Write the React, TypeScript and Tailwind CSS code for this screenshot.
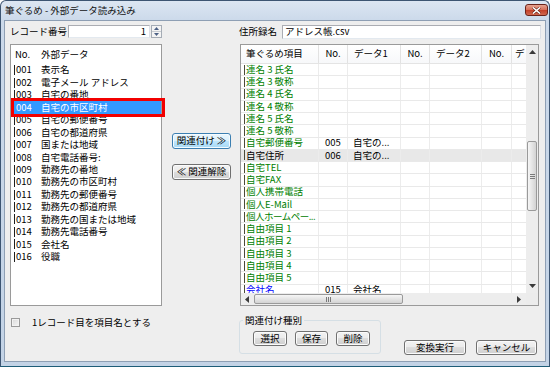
import React from "react";

const sourceRows: [string, string][] = [
  ["001", "表示名"],
  ["002", "電子メール アドレス"],
  ["003", "自宅の番地"],
  ["004", "自宅の市区町村"],
  ["005", "自宅の郵便番号"],
  ["006", "自宅の都道府県"],
  ["007", "国または地域"],
  ["008", "自宅電話番号:"],
  ["009", "勤務先の番地"],
  ["010", "勤務先の市区町村"],
  ["011", "勤務先の郵便番号"],
  ["012", "勤務先の都道府県"],
  ["013", "勤務先の国または地域"],
  ["014", "勤務先電話番号"],
  ["015", "会社名"],
  ["016", "役職"],
];

type FieldRow = {
  name: string;
  no?: string;
  data?: string;
  tone: "green" | "black" | "blue";
  hot?: boolean;
  tight?: boolean;
};

const fieldRows: FieldRow[] = [
  { name: "連名 3 氏名", tone: "green" },
  { name: "連名 3 敬称", tone: "green" },
  { name: "連名 4 氏名", tone: "green" },
  { name: "連名 4 敬称", tone: "green" },
  { name: "連名 5 氏名", tone: "green" },
  { name: "連名 5 敬称", tone: "green" },
  { name: "自宅郵便番号", no: "005", data: "自宅の...", tone: "green" },
  { name: "自宅住所", no: "006", data: "自宅の...", tone: "black", hot: true },
  { name: "自宅TEL", tone: "green" },
  { name: "自宅FAX", tone: "green" },
  { name: "個人携帯電話", tone: "green" },
  { name: "個人E-Mail", tone: "green" },
  { name: "個人ホームペー...", tone: "green", tight: true },
  { name: "自由項目 1", tone: "green" },
  { name: "自由項目 2", tone: "green" },
  { name: "自由項目 3", tone: "green" },
  { name: "自由項目 4", tone: "green" },
  { name: "自由項目 5", tone: "green" },
  { name: "会社名", no: "015", data: "会社名", tone: "blue" },
];

const toneClass = { green: "text-[#008000]", black: "text-black", blue: "text-[#0000ff]" };

const btn =
  "flex items-center justify-center rounded-[3px] border border-[#707070] bg-[linear-gradient(#f2f2f2_0%,#ebebeb_50%,#dddddd_50%,#cfcfcf_100%)] shadow-[inset_0_0_0_1px_#fbfbfb]";

const Arrow = ({ dir }: { dir: "up" | "down" | "left" | "right" }) => {
  const pts = {
    up: "0,4 3.5,0 7,4",
    down: "0,0 3.5,4 7,0",
    left: "4,0 0,3.5 4,7",
    right: "0,0 4,3.5 0,7",
  }[dir];
  const vertical = dir === "up" || dir === "down";
  return (
    <svg width={vertical ? 7 : 4} height={vertical ? 4 : 7} viewBox={vertical ? "0 0 7 4" : "0 0 4 7"}>
      <polygon points={pts} fill="#3a3a3a" />
    </svg>
  );
};

const CloseButton = () => (
  <div className="mr-[1px] flex h-[12px] w-[23px] items-center justify-center rounded-[3px] border border-[#6b231a] bg-[linear-gradient(#e6a391_0%,#d8735d_45%,#c4422b_55%,#d0684f_100%)]">
    <svg width="9" height="7" viewBox="0 0 9 7">
      <path d="M1 0.5 L8 6.5 M8 0.5 L1 6.5" stroke="#5a1a10" strokeWidth="2.6" />
      <path d="M1 0.5 L8 6.5 M8 0.5 L1 6.5" stroke="#ffffff" strokeWidth="1.6" />
    </svg>
  </div>
);

const Spinner = () => (
  <div className="ml-[1px] flex h-[13px] w-[11px] flex-col border border-[#a5acb5] bg-[#f4f4f4]">
    <div className="flex flex-1 items-center justify-center border-b border-[#c7cbd1]">
      <svg width="5" height="3" viewBox="0 0 5 3"><polygon points="0,3 2.5,0 5,3" fill="#4d6185" /></svg>
    </div>
    <div className="flex flex-1 items-center justify-center">
      <svg width="5" height="3" viewBox="0 0 5 3"><polygon points="0,0 2.5,3 5,0" fill="#4d6185" /></svg>
    </div>
  </div>
);

const Grip = ({ vertical }: { vertical?: boolean }) =>
  vertical ? (
    <div className="flex flex-col gap-[1px]">
      <div className="h-px w-[5px] bg-[#7a7a7a]" />
      <div className="h-px w-[5px] bg-[#7a7a7a]" />
      <div className="h-px w-[5px] bg-[#7a7a7a]" />
    </div>
  ) : (
    <div className="flex gap-[1px]">
      <div className="h-[5px] w-px bg-[#7a7a7a]" />
      <div className="h-[5px] w-px bg-[#7a7a7a]" />
      <div className="h-[5px] w-px bg-[#7a7a7a]" />
    </div>
  );

const SourceList = () => (
  <div className="relative w-[152px] shrink-0">
    <div className="flex h-full flex-col border border-[#9a9a9a] bg-white">
      <div className="flex h-[19px] shrink-0 items-center pl-[4px]">
        <span className="w-[26px]">No.</span>
        <span>外部データ</span>
      </div>
      {sourceRows.map(([no, name]) => {
        const sel = no === "004";
        return (
          <div key={no} className="flex h-[12.45px] shrink-0 pl-[3px]">
            <div className={`flex flex-1 items-center ${sel ? "bg-[#3399ff] text-white" : ""}`}>
              <span className={`h-[10px] w-px ${sel ? "" : "bg-[#1e1e1e]"}`} />
              <span className="ml-[1px] w-[25px]">{no}</span>
              <span>{name}</span>
            </div>
          </div>
        );
      })}
    </div>
    <div className="pointer-events-none absolute left-[1px] top-[54px] h-[19px] w-[154px] border-[3px] border-[#f20000]" />
  </div>
);

const FieldGrid = () => (
  <div className="flex w-[299px] shrink-0 flex-col border border-[#9a9a9a] bg-white">
    <div className="flex min-h-0 flex-1">
      <div className="flex min-w-0 flex-1 flex-col overflow-hidden">
        <div className="flex h-[19px] shrink-0 border-b border-[#e4e4e4] bg-[linear-gradient(#ffffff,#f7f8fa)]">
          <div className="flex w-[78px] shrink-0 items-center border-r border-[#e2e2e2] pl-[5px]">筆ぐるめ項目</div>
          <div className="flex w-[29px] shrink-0 items-center justify-center border-r border-[#e2e2e2]">No.</div>
          <div className="flex w-[53px] shrink-0 items-center border-r border-[#e2e2e2] pl-[6px]">データ1</div>
          <div className="flex w-[29px] shrink-0 items-center justify-center border-r border-[#e2e2e2]">No.</div>
          <div className="flex w-[52px] shrink-0 items-center border-r border-[#e2e2e2] pl-[6px]">データ2</div>
          <div className="flex w-[30px] shrink-0 items-center justify-center border-r border-[#e2e2e2]">No.</div>
          <div className="flex w-[20px] shrink-0 items-center pl-[3px]">デ</div>
        </div>
        <div className="min-h-0 flex-1 overflow-hidden">
          {fieldRows.map((r) => (
            <div
              key={r.name}
              className={`flex h-[12.25px] shrink-0 border-b border-[#e9e9e9] ${r.hot ? "bg-[#e8e8e8]" : ""}`}
            >
              <div className={`flex w-[78px] shrink-0 items-center border-r border-[#ececec] pl-[3px] ${toneClass[r.tone]}`}>
                <span className="h-[10px] w-px shrink-0 bg-[#4a4a3a]" />
                <span className={`ml-[1px] whitespace-nowrap ${r.tight ? "tracking-[-0.5px]" : ""}`}>{r.name}</span>
              </div>
              <div className="flex w-[29px] shrink-0 items-center border-r border-[#ececec] pl-[6px]">{r.no}</div>
              <div className="flex w-[53px] shrink-0 items-center whitespace-nowrap border-r border-[#ececec] pl-[5px]">{r.data}</div>
              <div className="w-[29px] shrink-0 border-r border-[#ececec]" />
              <div className="w-[52px] shrink-0 border-r border-[#ececec]" />
              <div className="w-[30px] shrink-0 border-r border-[#ececec]" />
              <div className="w-[20px] shrink-0" />
            </div>
          ))}
        </div>
      </div>
      <div className="flex w-[12px] shrink-0 flex-col bg-[#ededed]">
        <div className="flex h-[14px] items-center justify-center"><Arrow dir="up" /></div>
        <div className="mx-[1px] mt-[82px] flex h-[70px] items-center justify-center rounded-[2px] border border-[#9a9a9a] bg-[linear-gradient(90deg,#f6f6f6,#e3e3e3_55%,#d3d3d3)]">
          <Grip vertical />
        </div>
        <div className="flex-1" />
        <div className="flex h-[14px] items-center justify-center"><Arrow dir="down" /></div>
      </div>
    </div>
    <div className="flex h-[12px] shrink-0 bg-[#ededed]">
      <div className="flex w-[12px] items-center justify-center"><Arrow dir="left" /></div>
      <div className="my-[1px] ml-[1px] flex w-[149px] items-center justify-center rounded-[2px] border border-[#9a9a9a] bg-[linear-gradient(#f6f6f6,#e3e3e3_55%,#d3d3d3)]">
        <Grip />
      </div>
      <div className="flex-1" />
      <div className="flex w-[14px] items-center justify-center"><Arrow dir="right" /></div>
      <div className="w-[12px] bg-[#ececec]" />
    </div>
  </div>
);

export default function App() {
  return (
    <div className="h-[367px] w-[550px] bg-white">
      <div className="flex h-full w-full flex-col overflow-hidden rounded-t-[6px] border border-[#3d5572] border-b-[#1d5d78] bg-[linear-gradient(#dce6f2,#cbd9ea_20px,#c3d3e6)] [font-family:'Noto_Sans_CJK_JP','Noto_Sans',sans-serif] text-[9.5px] leading-none text-black">
        <div className="flex h-[19px] shrink-0 items-start justify-between pl-[4px] pt-[3px]">
          <span className="mt-[2px] text-[#111]">筆ぐるめ - 外部データ読み込み</span>
          <CloseButton />
        </div>

        <div className="mx-[3px] flex h-[342px] shrink-0 flex-col border border-[#8e9fb4] bg-[#eeeeee] pl-[5px] pr-[4px] pt-[4px]">
          <div className="flex h-[13px] shrink-0 items-center">
            <div className="flex w-[152px] shrink-0 items-center">
              <span className="w-[58px]">レコード番号</span>
              <div className="flex h-[13px] w-[82px] items-center justify-end border border-[#abadb3] border-b-[#e3e9ef] border-r-[#dbdfe6] bg-white pr-[3px]">
                1
              </div>
              <Spinner />
            </div>
            <div className="w-[77px] shrink-0" />
            <div className="flex flex-1 items-center">
              <span className="w-[43px] shrink-0">住所録名</span>
              <div className="flex h-[14px] flex-1 items-center border border-[#abadb3] border-b-[#e3e9ef] border-r-[#dbdfe6] bg-white pl-[2px]">
                アドレス帳.csv
              </div>
            </div>
          </div>

          <div className="mt-[6px] flex h-[262px] shrink-0">
            <SourceList />
            <div className="flex w-[78px] shrink-0 flex-col pl-[10px]">
              <div className="mt-[89px] flex h-[16px] w-[59px] items-center justify-center rounded-[3px] border border-[#3c7fb1] bg-[linear-gradient(#eaf6fd_0%,#d9f0fc_50%,#bee6fd_50%,#a7d9f5_100%)] shadow-[inset_0_0_0_1px_#f4fbff]">
                関連付け ≫
              </div>
              <div className={`mt-[15px] h-[16px] w-[59px] ${btn}`}>≪ 関連解除</div>
            </div>
            <FieldGrid />
          </div>

          <div className="flex flex-1 items-start">
            <div className="flex w-[229px] shrink-0 items-center pl-[1px] pt-[12px]">
              <div className="h-[9px] w-[9px] border border-[#9a9a9a] bg-[linear-gradient(135deg,#d8d8d8,#f6f6f6)] shadow-[inset_0_0_0_1px_#f2f2f2]" />
              <span className="ml-[12px]">1レコード目を項目名とする</span>
            </div>
            <fieldset className="mt-[9px] h-[39px] w-[142px] shrink-0 rounded-[3px] border border-[#d5dfe5]">
              <legend className="ml-[3px] px-[2px] leading-[10px]">関連付け種別</legend>
              <div className="mt-[6px] flex gap-[8px] pl-[13px]">
                <div className={`h-[15px] w-[34px] ${btn}`}>選択</div>
                <div className={`h-[15px] w-[33px] ${btn}`}>保存</div>
                <div className={`h-[15px] w-[34px] ${btn}`}>削除</div>
              </div>
            </fieldset>
            <div className={`ml-[23px] mt-[34px] h-[15px] w-[62px] ${btn}`}>変換実行</div>
            <div className={`ml-[10px] mt-[34px] h-[15px] w-[61px] ${btn}`}>キャンセル</div>
          </div>
        </div>
      </div>
    </div>
  );
}
